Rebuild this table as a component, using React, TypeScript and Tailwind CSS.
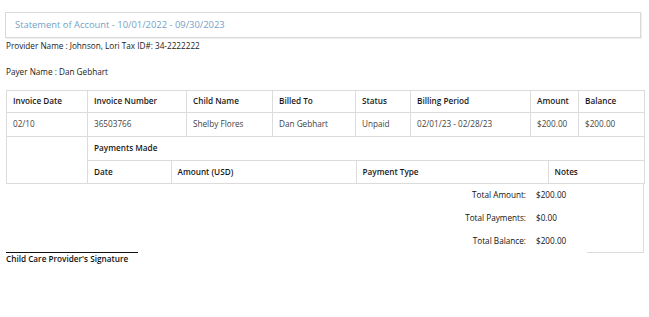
const invoice = {
  date: '02/10',
  number: '36503766',
  child: 'Shelby Flores',
  billedTo: 'Dan Gebhart',
  status: 'Unpaid',
  period: '02/01/23 - 02/28/23',
  amount: '$200.00',
  balance: '$200.00',
}

const totals = [
  { label: 'Total Amount:', value: '$200.00' },
  { label: 'Total Payments:', value: '$0.00' },
  { label: 'Total Balance:', value: '$200.00' },
]

const th = 'border border-[#dcdcdc] px-[6px] text-left font-semibold text-[#1a1a1a]'
const td = 'border border-[#dcdcdc] px-[6px] text-left font-normal text-[#444]'
const sub = 'px-[6px] text-left font-semibold text-[#1a1a1a]'

export default function App() {
  return (
    <div className="w-[649px] h-[317px] bg-white pl-[6px] pr-[5px] pt-[12px] text-[8.2px] text-[#1a1a1a] font-['Open_Sans','Liberation_Sans',sans-serif]">
      {/* header */}
      <div className="-ml-px mr-[3px] h-[26px] flex items-center border border-[#d9d9d9] shadow-[1px_1px_1px_rgba(0,0,0,0.06)] px-[9px] text-[9.4px] text-[#74a2c8]">
        Statement of Account - 10/01/2022 - 09/30/2023
      </div>
      <div className="mt-[1px] h-[14px] leading-[14px]">Provider Name : Johnson, Lori Tax ID#: 34-2222222</div>
      <div className="mt-[12px] h-[14px] leading-[14px]">Payer Name : Dan Gebhart</div>

      {/* invoices */}
      <table className="mt-[11px] w-[638px] border-collapse table-fixed">
        <colgroup>
          <col className="w-[81px]" />
          <col className="w-[99px]" />
          <col className="w-[86px]" />
          <col className="w-[83px]" />
          <col className="w-[55px]" />
          <col className="w-[120px]" />
          <col className="w-[48px]" />
          <col className="w-[66px]" />
        </colgroup>
        <thead>
          <tr className="h-[22px]">
            <th className={th}>Invoice Date</th>
            <th className={th}>Invoice Number</th>
            <th className={th}>Child Name</th>
            <th className={th}>Billed To</th>
            <th className={th}>Status</th>
            <th className={th}>Billing Period</th>
            <th className={th}>Amount</th>
            <th className={th}>Balance</th>
          </tr>
        </thead>
        <tbody>
          <tr className="h-[24px]">
            <td className={td}>{invoice.date}</td>
            <td className={td}>{invoice.number}</td>
            <td className={td}>{invoice.child}</td>
            <td className={td}>{invoice.billedTo}</td>
            <td className={td}>{invoice.status}</td>
            <td className={td}>{invoice.period}</td>
            <td className={td}>{invoice.amount}</td>
            <td className={td}>{invoice.balance}</td>
          </tr>
          <tr>
            <td className="border border-[#dcdcdc]" />
            <td colSpan={7} className="border border-[#dcdcdc] p-0">
              <table className="w-full border-collapse table-fixed">
                <colgroup>
                  <col className="w-[83px]" />
                  <col className="w-[185px]" />
                  <col className="w-[192px]" />
                  <col className="w-[97px]" />
                </colgroup>
                <tbody>
                  <tr className="h-[23px]">
                    <th colSpan={4} className={`border-b border-[#dcdcdc] ${sub}`}>
                      Payments Made
                    </th>
                  </tr>
                  <tr className="h-[23px]">
                    <th className={`border-r border-[#dcdcdc] ${sub}`}>Date</th>
                    <th className={`border-r border-[#dcdcdc] ${sub}`}>Amount (USD)</th>
                    <th className={`border-r border-[#dcdcdc] ${sub}`}>Payment Type</th>
                    <th className={sub}>Notes</th>
                  </tr>
                </tbody>
              </table>
            </td>
          </tr>
        </tbody>
      </table>

      {/* totals */}
      <div className="w-[638px] flex justify-end">
        <div className="relative w-[300px]">
          {totals.map((t) => (
            <div key={t.label} className="flex h-[23px] items-center">
              <div className="w-[182px] text-right text-[#111]">{t.label}</div>
              <div className="pl-[10px] text-[#111]">{t.value}</div>
            </div>
          ))}
          <div className="absolute right-0 top-0 h-[69px] w-[57px] border-r border-b border-[#dcdcdc]" />
        </div>
      </div>

      {/* signature */}
      <div className="mt-[-1px] w-[132px] border-t border-[#111]" />
      <div className="h-[12px] leading-[12px] font-semibold text-[#111]">Child Care Provider&apos;s Signature</div>
    </div>
  )
}
